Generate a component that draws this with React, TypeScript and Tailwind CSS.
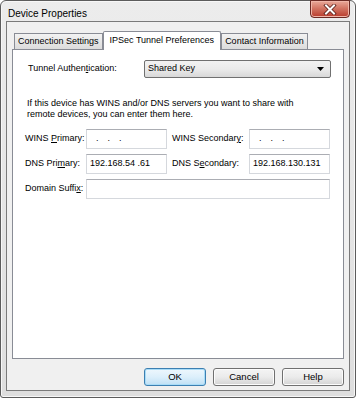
import React from 'react'

const font = { fontFamily: '"Liberation Sans", Arial, sans-serif' }

function U({ children }: { children: React.ReactNode }) {
  return <span className="underline underline-offset-[1px]">{children}</span>
}

function IpBox({ value }: { value?: string }) {
  return (
    <div className="w-[81px] h-[20px] shrink-0 bg-white border border-[#d5d8dd] border-t-[#abadb3] flex items-center px-[3px] text-[9px] text-black whitespace-nowrap">
      {value ? (
        <span>{value}</span>
      ) : (
        <div className="flex items-center gap-[9px] pl-[6px]">
          <span>.</span>
          <span>.</span>
          <span>.</span>
        </div>
      )}
    </div>
  )
}

function Tab({ label, active }: { label: string; active?: boolean }) {
  if (active) {
    return (
      <div className="relative z-10 -mb-px h-[19px] px-[6px] bg-white border border-b-0 border-[#898c95] rounded-t-[2px] flex items-start pt-[2px] text-[9px] text-black whitespace-nowrap">
        {label}
      </div>
    )
  }
  return (
    <div className="h-[16px] px-[3px] bg-linear-to-b from-[#f2f2f2] to-[#dcdcdc] border border-b-0 border-[#898c95] flex items-center pt-[1px] text-[9px] text-black whitespace-nowrap">
      {label}
    </div>
  )
}

function Button({ label, primary }: { label: string; primary?: boolean }) {
  return (
    <div
      className={
        primary
          ? 'w-[62px] h-[18px] rounded-[3px] border border-[#3c7fb1] bg-linear-to-b from-[#eef7fd] via-[#dceffb] to-[#bfe0f5] shadow-[inset_0_0_0_1px_#a8dcf8] flex items-center justify-center text-[9.5px] text-black'
          : 'w-[62px] h-[18px] rounded-[3px] border border-[#707070] bg-linear-to-b from-[#f4f4f4] via-[#ebebeb] to-[#d3d3d3] shadow-[inset_0_0_0_1px_#fcfcfc] flex items-center justify-center text-[9.5px] text-black'
      }
    >
      {label}
    </div>
  )
}

export default function App() {
  return (
    <div className="w-[356px] h-[398px] bg-white" style={font}>
      <div className="relative w-[356px] h-[398px] rounded-t-[6px] rounded-b-[3px] border border-[#5c5c5c] bg-linear-to-b from-[#ececec] to-[#dedede] shadow-[inset_0_0_0_1px_#f7f7f7] px-[5px] pb-[6px] flex flex-col">
        {/* title bar */}
        <div className="h-[20px] flex items-center pl-[2px] pt-[4px] text-[10px] text-black shrink-0">
          Device Properties
        </div>
        <div className="absolute top-[-1px] right-[5px] w-[40px] h-[18px] rounded-b-[4px] border border-[#6b2a24] bg-linear-to-b from-[#e9a99a] via-[#d0705f] to-[#b8392b] shadow-[inset_0_0_0_1px_#f0b5a8] flex items-center justify-center">
          <svg width="14" height="11" viewBox="0 0 14 11">
            <path d="M3 1.5 L11 9.5 M11 1.5 L3 9.5" stroke="#5a1e17" strokeWidth="3.6" strokeLinecap="square" />
            <path d="M3 1.5 L11 9.5 M11 1.5 L3 9.5" stroke="#ffffff" strokeWidth="2" strokeLinecap="square" />
          </svg>
        </div>

        {/* client area */}
        <div className="flex-1 border border-[#7a7a7a] bg-[#f0f0f0] px-[5px] pt-[9px] flex flex-col">
          <div className="flex items-end pl-[2px] h-[18px]">
            <Tab label="Connection Settings" />
            <Tab label="IPSec Tunnel Preferences" active />
            <Tab label="Contact Information" />
          </div>

          <div className="h-[310px] border border-[#898c95] bg-white text-[9px] text-black whitespace-nowrap">
            <div className="flex items-center mt-[10px] pl-[15px]">
              <div className="w-[116px]">
                Tunnel Authen<U>t</U>ication:
              </div>
              <div className="w-[187px] h-[18px] rounded-[2px] border border-[#707070] bg-linear-to-b from-[#f2f2f2] via-[#ebebeb] to-[#d8d8d8] flex items-center justify-between pl-[3px] pr-[6px]">
                <span>Shared Key</span>
                <svg width="7" height="4" viewBox="0 0 7 4">
                  <path d="M0 0 H7 L3.5 4 Z" fill="#000" />
                </svg>
              </div>
            </div>

            <p className="mt-[20px] pl-[14px] leading-[11px]">
              If this device has WINS and/or DNS servers you want to share with
              <br />
              remote devices, you can enter them here.
            </p>

            <div className="mt-[9px] pl-[12px] flex flex-col gap-[5px]">
              <div className="flex items-center">
                <div className="w-[61px] shrink-0">
                  WINS <U>P</U>rimary:
                </div>
                <IpBox />
                <div className="w-[82px] shrink-0 pl-[5px]">
                  WINS Secondar<U>y</U>:
                </div>
                <IpBox />
              </div>
              <div className="flex items-center">
                <div className="w-[61px] shrink-0">
                  DNS Pri<U>m</U>ary:
                </div>
                <IpBox value="192.168.54 .61" />
                <div className="w-[82px] shrink-0 pl-[5px]">
                  DNS S<U>e</U>condary:
                </div>
                <IpBox value="192.168.130.131" />
              </div>
              <div className="flex items-center">
                <div className="w-[61px] shrink-0">
                  Domain Suffi<U>x</U>:
                </div>
                <div className="w-[244px] h-[20px] bg-white border border-[#d5d8dd] border-t-[#abadb3]" />
              </div>
            </div>
          </div>

          <div className="flex justify-end gap-[7px] mt-[9px]">
            <Button label="OK" primary />
            <Button label="Cancel" />
            <Button label="Help" />
          </div>
        </div>
      </div>
    </div>
  )
}
